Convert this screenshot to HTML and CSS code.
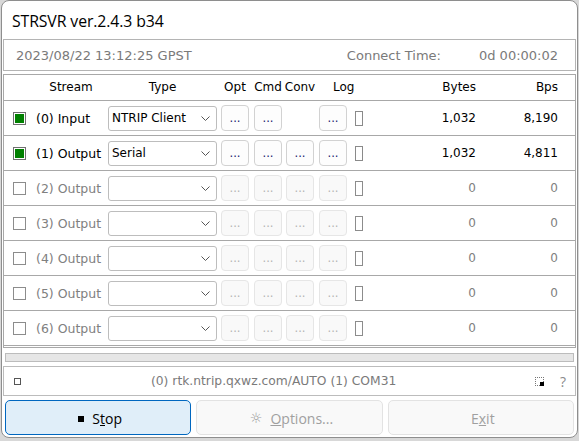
FILE: index.html
```html
<!DOCTYPE html>
<html>
<head>
<meta charset="utf-8">
<title>STRSVR</title>
<link rel="stylesheet" href="styles.css">
</head>
<body>
<div class="window">
  <div class="titlebar">STRSVR ver.2.4.3 b34</div>

  <div class="timebar">
    <span class="date">2023/08/22 13:12:25 GPST</span>
    <span class="ctlabel">Connect Time:</span>
    <span class="cttime">0d 00:00:02</span>
  </div>

  <div class="streams">
    <div class="row hdr">
      <div class="h-stream">Stream</div>
      <div class="h-center">Type</div>
      <div class="h-btn">Opt</div>
      <div class="h-btn">Cmd</div>
      <div class="h-btn">Conv</div>
      <div class="h-log">Log</div>
      <div class="num">Bytes</div>
      <div class="num h-bps">Bps</div>
    </div>

    <div class="row">
      <div class="namecell"><span class="chk on"></span><span class="lbl">(0) Input</span></div>
      <div><div class="combo"><span>NTRIP Client</span><svg class="chev" width="9" height="5" viewBox="0 0 9 5"><polyline points="0.5,0.5 4.5,4.5 8.5,0.5" fill="none" stroke="#555" stroke-width="1"/></svg></div></div>
      <div><button class="dots">...</button></div>
      <div><button class="dots">...</button></div>
      <div></div>
      <div><button class="dots">...</button></div>
      <div><span class="ind"></span></div>
      <div class="num">1,032</div>
      <div class="num">8,190</div>
    </div>

    <div class="row">
      <div class="namecell"><span class="chk on"></span><span class="lbl">(1) Output</span></div>
      <div><div class="combo"><span>Serial</span><svg class="chev" width="9" height="5" viewBox="0 0 9 5"><polyline points="0.5,0.5 4.5,4.5 8.5,0.5" fill="none" stroke="#555" stroke-width="1"/></svg></div></div>
      <div><button class="dots">...</button></div>
      <div><button class="dots">...</button></div>
      <div><button class="dots">...</button></div>
      <div><button class="dots">...</button></div>
      <div><span class="ind"></span></div>
      <div class="num">1,032</div>
      <div class="num">4,811</div>
    </div>

    <div class="row off">
      <div class="namecell"><span class="chk"></span><span class="lbl">(2) Output</span></div>
      <div><div class="combo"><span></span><svg class="chev" width="9" height="5" viewBox="0 0 9 5"><polyline points="0.5,0.5 4.5,4.5 8.5,0.5" fill="none" stroke="#555" stroke-width="1"/></svg></div></div>
      <div><button class="dots">...</button></div>
      <div><button class="dots">...</button></div>
      <div><button class="dots">...</button></div>
      <div><button class="dots">...</button></div>
      <div><span class="ind"></span></div>
      <div class="num">0</div>
      <div class="num">0</div>
    </div>

    <div class="row off">
      <div class="namecell"><span class="chk"></span><span class="lbl">(3) Output</span></div>
      <div><div class="combo"><span></span><svg class="chev" width="9" height="5" viewBox="0 0 9 5"><polyline points="0.5,0.5 4.5,4.5 8.5,0.5" fill="none" stroke="#555" stroke-width="1"/></svg></div></div>
      <div><button class="dots">...</button></div>
      <div><button class="dots">...</button></div>
      <div><button class="dots">...</button></div>
      <div><button class="dots">...</button></div>
      <div><span class="ind"></span></div>
      <div class="num">0</div>
      <div class="num">0</div>
    </div>

    <div class="row off">
      <div class="namecell"><span class="chk"></span><span class="lbl">(4) Output</span></div>
      <div><div class="combo"><span></span><svg class="chev" width="9" height="5" viewBox="0 0 9 5"><polyline points="0.5,0.5 4.5,4.5 8.5,0.5" fill="none" stroke="#555" stroke-width="1"/></svg></div></div>
      <div><button class="dots">...</button></div>
      <div><button class="dots">...</button></div>
      <div><button class="dots">...</button></div>
      <div><button class="dots">...</button></div>
      <div><span class="ind"></span></div>
      <div class="num">0</div>
      <div class="num">0</div>
    </div>

    <div class="row off">
      <div class="namecell"><span class="chk"></span><span class="lbl">(5) Output</span></div>
      <div><div class="combo"><span></span><svg class="chev" width="9" height="5" viewBox="0 0 9 5"><polyline points="0.5,0.5 4.5,4.5 8.5,0.5" fill="none" stroke="#555" stroke-width="1"/></svg></div></div>
      <div><button class="dots">...</button></div>
      <div><button class="dots">...</button></div>
      <div><button class="dots">...</button></div>
      <div><button class="dots">...</button></div>
      <div><span class="ind"></span></div>
      <div class="num">0</div>
      <div class="num">0</div>
    </div>

    <div class="row off">
      <div class="namecell"><span class="chk"></span><span class="lbl">(6) Output</span></div>
      <div><div class="combo"><span></span><svg class="chev" width="9" height="5" viewBox="0 0 9 5"><polyline points="0.5,0.5 4.5,4.5 8.5,0.5" fill="none" stroke="#555" stroke-width="1"/></svg></div></div>
      <div><button class="dots">...</button></div>
      <div><button class="dots">...</button></div>
      <div><button class="dots">...</button></div>
      <div><button class="dots">...</button></div>
      <div><span class="ind"></span></div>
      <div class="num">0</div>
      <div class="num">0</div>
    </div>
  </div>

  <div class="progress"></div>

  <div class="status">
    <span class="sq"></span>
    <span class="stext">(0) rtk.ntrip.qxwz.com/AUTO (1) COM31</span>
    <span class="dotsq"><span class="dotsq-in"></span></span>
    <span class="help">?</span>
  </div>

  <div class="buttons">
    <button class="bigbtn primary"><span class="stopico"></span><span>S<u>t</u>op</span></button>
    <button class="bigbtn dis"><span class="gear">☼</span><span><u>O</u>ptions...</span></button>
    <button class="bigbtn dis"><span>E<u>x</u>it</span></button>
  </div>
</div>
</body>
</html>
```

FILE: styles.css
```css
* { box-sizing: border-box; }

html, body {
  margin: 0;
  padding: 0;
}

body {
  background: #d8d8d8;
  width: 579px;
  height: 441px;
  overflow: hidden;
  font-family: "DejaVu Sans", Verdana, sans-serif;
  font-size: 12px;
  color: #000;
}

.window {
  margin-left: 1px;
  width: 577px;
  height: 438px;
  background: #ffffff;
  border: 1px solid #8e8e8e;
  border-radius: 8px;
  padding: 0 1px 1px 1px;
  display: flex;
  flex-direction: column;
}

.titlebar {
  height: 38px;
  display: flex;
  align-items: center;
  padding-left: 9px;
  padding-top: 1px;
  font-family: "Open Sans", "Noto Sans", sans-serif;
  font-size: 15.8px;
  letter-spacing: -0.1px;
  color: #000;
}

.timebar {
  height: 32px;
  border: 1px solid #b4b4b4;
  display: flex;
  align-items: center;
  padding: 0 17px 0 12px;
  font-size: 13px;
  color: #7a7a7a;
}

.timebar .date { flex: 1; }
.timebar .ctlabel { margin-right: 38px; }

.streams {
  margin-top: 3px;
  border: 1px solid #a8a8a8;
  padding-bottom: 1px;
}

.row {
  display: grid;
  grid-template-columns: 104px 113px 33px 32px 33px 36px 8px 113px 82px 1fr;
  align-items: center;
  height: 35px;
  border-bottom: 1px solid #a8a8a8;
}

.row.hdr {
  height: 26px;
  padding-bottom: 1px;
}

.h-stream { padding-left: 30px; text-align: center; }
.h-center { text-align: center; padding-right: 4px; }
.h-btn { width: 28px; text-align: center; white-space: nowrap; display: flex; justify-content: center; }
.h-log { padding-left: 14px; grid-column: 6 / span 2; }
.num { text-align: right; }

.namecell {
  display: flex;
  align-items: center;
  padding-left: 9px;
}

.chk {
  width: 13px;
  height: 13px;
  border: 1px solid #7a7a7a;
  background: #fff;
  flex: none;
}

.chk.on {
  background: #008000;
  box-shadow: inset 0 0 0 1px #ffffff;
  border-color: #6f6f6f;
}

.lbl {
  margin-left: 10px;
  font-size: 12.5px;
  white-space: nowrap;
}

.combo {
  width: 109px;
  height: 25px;
  border: 1px solid #bdbdbd;
  border-radius: 3px;
  display: flex;
  align-items: center;
  justify-content: space-between;
  padding: 0 6px 0 3px;
  background: #fff;
}

.dots {
  width: 28px;
  height: 26px;
  border: 1px solid #d2d2d2;
  border-radius: 4px;
  background: #fdfdfd;
  font-family: "DejaVu Sans", sans-serif;
  font-size: 11.5px;
  color: #1c1c6e;
  padding: 0;
  display: block;
}

.ind {
  display: block;
  width: 8px;
  height: 15px;
  border: 1px solid #8a8a8a;
  background: #fff;
}

.row.off .lbl,
.row.off .num { color: #808080; }
.row.off .chk { border-color: #8c8c8c; }
.row.off .dots {
  border-color: #e6e6e6;
  background: #f9f9f9;
  color: #b4b4b4;
}
.row.off .ind { border-color: #8c8c8c; }

.progress {
  margin: 5px 2px 0 2px;
  height: 9px;
  background: #e6e6e6;
  border: 1px solid #bcbcbc;
}

.status {
  margin-top: 4px;
  height: 30px;
  border: 1px solid #bcbcbc;
  display: flex;
  align-items: center;
  padding: 0 9px 0 10px;
  color: #7a7a7a;
}

.sq {
  width: 7px;
  height: 7px;
  border: 1px solid #555;
  flex: none;
}

.stext {
  margin-left: 130px;
  flex: 1;
  font-size: 12.3px;
}

.dotsq {
  position: relative;
  width: 9px;
  height: 9px;
  border: 1px dotted #777;
  margin-right: 16px;
  flex: none;
}

.dotsq-in {
  position: absolute;
  right: -1px;
  bottom: -1px;
  width: 4px;
  height: 4px;
  background: #000;
  border: 1px solid #000;
}

.help {
  font-family: "Open Sans", sans-serif;
  font-size: 14px;
  color: #8a8a8a;
}

.buttons {
  margin-top: 4px;
  padding: 0 2px;
  display: grid;
  grid-template-columns: 1fr 1fr 1fr;
  gap: 5px;
}

.bigbtn {
  height: 35px;
  border: 1px solid #e3e3e3;
  border-radius: 5px;
  background: #f9f9f9;
  font-family: "Open Sans", "Noto Sans", sans-serif;
  font-size: 14px;
  color: #a0a0a0;
  display: flex;
  align-items: center;
  justify-content: center;
  gap: 8px;
  padding: 1px 0 0 4px;
}

.bigbtn.primary {
  background: #e0eef9;
  border-color: #0067c0;
  color: #000;
}

.stopico {
  width: 6px;
  height: 6px;
  background: #000;
  margin-top: 2px;
}

.gear {
  font-family: "DejaVu Sans", sans-serif;
  font-size: 14px;
  color: #9a9a9a;
}
```
